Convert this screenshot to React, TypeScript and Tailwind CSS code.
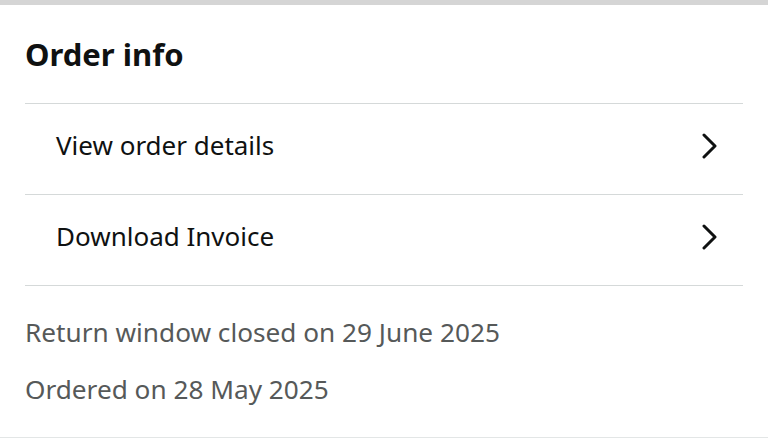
const Chevron = () => (
  <svg width="16" height="26" viewBox="0 0 16 26" fill="none" className="shrink-0">
    <path d="M3 2 L14 13 L3 24" stroke="#0f1111" strokeWidth="3" strokeLinecap="round" strokeLinejoin="round" />
  </svg>
);

const Row = ({ label }: { label: string }) => (
  <div className="flex h-[91px] items-center justify-between border-b border-[#d5d9d9] pb-[7px] pl-[31px] pr-[26px]">
    <span className="text-[26px] text-[#0f1111]">{label}</span>
    <Chevron />
  </div>
);

export default function App() {
  return (
    <div className="h-[439px] w-[768px] overflow-hidden bg-white" style={{ fontFamily: '"Noto Sans", "Open Sans", sans-serif' }}>
      <div className="h-[5px] bg-[#d5d5d5]"></div>
      <div className="border-b border-[#e3e6e6]">
        <div className="px-[25px]">
          <div className="flex h-[99px] items-center border-b border-[#d5d9d9]">
            <h2 className="text-[31px] font-bold text-[#0f1111]">Order info</h2>
          </div>
          <Row label="View order details" />
          <Row label="Download Invoice" />
          <div className="flex h-[151px] flex-col pt-[18px] text-[26.2px] text-[#565959]">
            <div className="leading-[57px]">Return window closed on 29 June 2025</div>
            <div className="leading-[57px]">Ordered on 28 May 2025</div>
          </div>
        </div>
      </div>
    </div>
  );
}
